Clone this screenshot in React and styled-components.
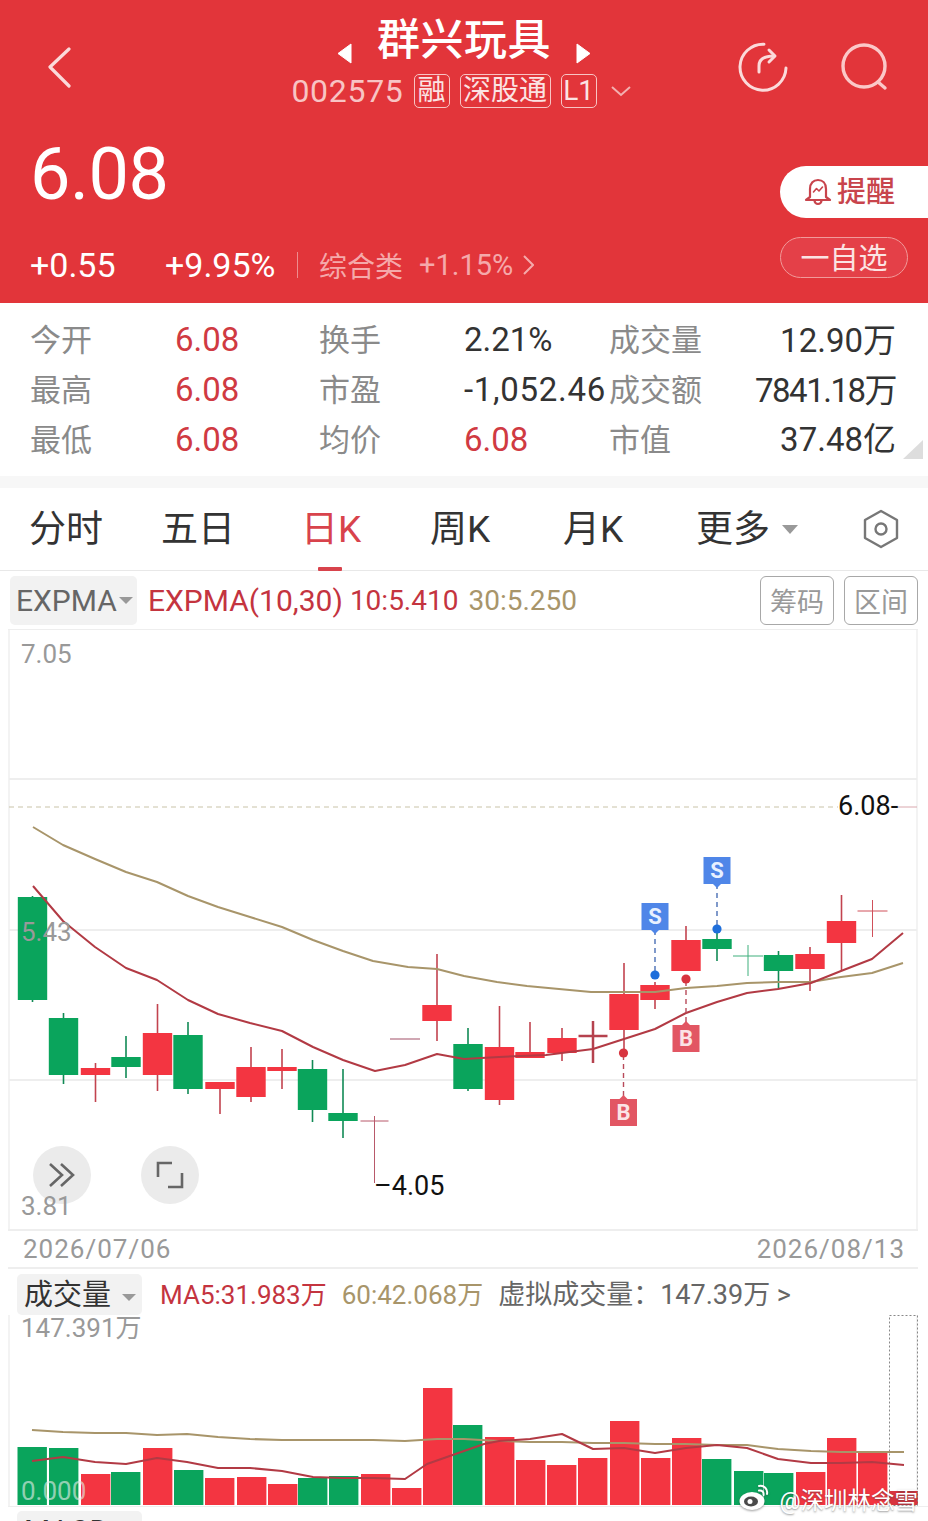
import React from 'react'
import styled, { createGlobalStyle } from 'styled-components'

const RED = '#E2353A'
const UP = '#F33541'
const DOWN = '#0AA45C'
const LINE_RED = '#B23A44'
const LINE_TAN = '#A8956A'
const CJK = `Roboto, "Noto Sans CJK SC", sans-serif`

const Global = createGlobalStyle`
  html, body { margin: 0; padding: 0; background: #fff; }
  body { font-family: ${CJK}; overflow: hidden; }
  * { box-sizing: border-box; }
`

const Page = styled.div`
  position: relative;
  width: 928px;
  height: 1521px;
  overflow: hidden;
  background: #fff;
`

/* ---------- red header ---------- */
const Header = styled.header`
  height: 303px;
  background: ${RED};
  color: #fff;
  display: flex;
  flex-direction: column;
`
const TopBar = styled.div`
  height: 122px;
  display: grid;
  grid-template-columns: 280px 1fr 280px;
`
const BackCell = styled.div`
  padding: 47px 0 0 46px;
`
const TitleCell = styled.div`
  display: flex;
  flex-direction: column;
  align-items: center;
`
const TitleRow = styled.div`
  display: flex;
  align-items: flex-start;
  gap: 25px;
  height: 66px;
`
const Title = styled.h1`
  margin: 10px 0 0;
  font-size: 43px;
  line-height: 60px;
  font-weight: 500;
  letter-spacing: 0.5px;
`
const ArrowBox = styled.span`
  display: flex;
  margin-top: 43px;
`
const SubRow = styled.div`
  display: flex;
  align-items: center;
  height: 36px;
  margin: 7px 6px 0 0;
  color: #F8C4C4;
`
const Code = styled.span`
  font-size: 32px;
  letter-spacing: 0.7px;
  margin-right: 10px;
`
const Tag = styled.span`
  display: inline-flex;
  align-items: center;
  justify-content: center;
  height: 34px;
  width: ${p => p.$w}px;
  margin-right: ${p => p.$gap || 10}px;
  border: 1px solid #F8C4C4;
  border-radius: 5px;
  font-size: 28px;
  line-height: 1;
  color: #FBE3E3;
  white-space: nowrap;
`
const IconCell = styled.div`
  display: flex;
  justify-content: flex-end;
  gap: 52px;
  padding: 42px 38px 0 0;
`
const PriceRow = styled.div`
  display: flex;
  justify-content: space-between;
  height: 112px;
`
const BigPrice = styled.div`
  font-size: 72px;
  line-height: 84px;
  margin: 11px 0 0 30px;
  letter-spacing: -0.5px;
`
const RemindButton = styled.div`
  width: 148px;
  height: 52px;
  margin-top: 44px;
  background: #fff;
  border-radius: 26px 0 0 26px;
  color: #C8444C;
  display: flex;
  align-items: center;
  padding-left: 24px;
  gap: 5px;
  font-size: 29px;
  font-weight: 500;
`
const RemindText = styled.span`
  margin-top: -6px;
`
const ChangeRow = styled.div`
  display: flex;
  align-items: center;
  justify-content: space-between;
  padding: 0 20px 0 30px;
  height: 41px;
  margin-top: 3px;
`
const ChangeInfo = styled.div`
  display: flex;
  align-items: center;
  padding-top: 14px;
`
const Change = styled.span`
  font-size: 34px;
  width: ${p => p.$w}px;
`
const Divider = styled.span`
  width: 1px;
  height: 26px;
  background: #EE8C8E;
  margin: 0 21px;
`
const Sector = styled.span`
  font-size: 28px;
  color: #F5A9AA;
  margin-right: 16px;
`
const SectorPct = styled.span`
  font-size: 29px;
  color: #F5A9AA;
  margin-right: 10px;
`
const WatchButton = styled.div`
  width: 128px;
  height: 41px;
  padding-bottom: 4px;
  border: 1px solid #F19A9A;
  border-radius: 21px;
  background: #E44048;
  display: flex;
  align-items: center;
  justify-content: center;
  font-size: 29px;
  color: #FBE3E3;
`

/* ---------- quote table ---------- */
const Stats = styled.section`
  position: relative;
  height: 185px;
  padding: 12px 32px 0 30px;
  display: grid;
  grid-template-columns: 145px 144px 145px 145px 95px 1fr;
  grid-auto-rows: 49.7px;
  align-items: center;
  border-bottom: 12px solid #F7F7F7;
`
const StatLabel = styled.span`
  font-size: 31px;
  margin-bottom: 4px;
  color: #8A8A8A;
  white-space: nowrap;
`
const StatValue = styled.span`
  font-size: 33px;
  color: ${p => (p.$up ? '#D03A42' : '#333')};
  text-align: ${p => (p.$right ? 'right' : 'left')};
  margin-bottom: ${p => (p.$right ? 4 : 0)}px;
  letter-spacing: ${p => p.$track || 0}px;
  white-space: nowrap;
`
const CornerMark = styled.span`
  position: absolute;
  right: 5px;
  bottom: 17px;
  width: 20px;
  height: 19px;
  background: #DDD;
  clip-path: polygon(100% 0, 100% 100%, 0 100%);
`

/* ---------- period tabs ---------- */
const Tabs = styled.nav`
  height: 83px;
  display: flex;
  align-items: center;
  padding: 0 27px 0 29px;
  border-bottom: 1px solid #E8E8E8;
`
const Tab = styled.span`
  position: relative;
  flex: none;
  width: ${p => (p.$w ? `${p.$w}px` : 'auto')};
  height: 83px;
  line-height: 84px;
  font-size: 37px;
  color: ${p => (p.$active ? '#D8434C' : '#333')};
  white-space: nowrap;
  ${p => p.$active && `
    &::after {
      content: '';
      position: absolute;
      left: 17px;
      bottom: 0;
      width: 24px;
      height: 4px;
      border-radius: 1px;
      background: #D8434C;
    }
  `}
`
const TabCaret = styled.span`
  width: 0;
  height: 0;
  margin-left: 12px;
  border-left: 8px solid transparent;
  border-right: 8px solid transparent;
  border-top: 9px solid #999;
`
const TabSettings = styled.span`
  margin-left: auto;
  margin-right: 2px;
  display: flex;
`

/* ---------- indicator rows ---------- */
const IndicatorRow = styled.div`
  height: 58px;
  display: flex;
  align-items: center;
  padding: 0 10px;
`
const Selector = styled.div`
  width: ${p => p.$w}px;
  height: ${p => p.$h}px;
  background: #F2F2F2;
  border-radius: 5px;
  color: ${p => p.$color};
  font-size: ${p => p.$size}px;
  display: flex;
  align-items: center;
  padding: 0 0 ${p => p.$lift || 0}px ${p => p.$pad}px;
  flex-shrink: 0;
`
const SelectorCaret = styled.span`
  width: 0;
  height: 0;
  margin-left: ${p => p.$gap}px;
  margin-top: ${p => p.$drop || 0}px;
  border-left: 7px solid transparent;
  border-right: 7px solid transparent;
  border-top: 7px solid #999;
`
const Reading = styled.span`
  font-size: ${p => p.$size || 30}px;
  color: ${p => p.$color};
  margin-left: ${p => p.$gap}px;
  margin-bottom: ${p => p.$lift || 0}px;
  white-space: nowrap;
`
const SideButton = styled.div`
  flex: none;
  width: 74px;
  height: 49px;
  margin-left: ${p => (p.$gap ? `${p.$gap}px` : 'auto')};
  border: 1px solid #A8A8A8;
  border-radius: 6px;
  color: #999;
  font-size: 27px;
  display: flex;
  align-items: center;
  justify-content: center;
`

/* ---------- charts ---------- */
const ChartPanel = styled.div`
  position: relative;
  width: 910px;
  height: 600px;
  margin-left: 8px;
`
const ChartSvg = styled.svg`
  display: block;
`
const AxisLabel = styled.span`
  position: absolute;
  left: 13px;
  top: ${p => p.$top}px;
  font-size: 26px;
  line-height: 30px;
  color: ${p => p.$light || '#999'};
  white-space: nowrap;
`
const PriceTag = styled.span`
  position: absolute;
  left: ${p => p.$left}px;
  top: ${p => p.$top}px;
  font-size: 27px;
  line-height: 30px;
  color: #111;
  white-space: nowrap;
`
const RoundButton = styled.div`
  position: absolute;
  left: ${p => p.$left}px;
  top: 517px;
  width: 58px;
  height: 58px;
  border-radius: 50%;
  background: #EBEBEB;
  display: flex;
  align-items: center;
  justify-content: center;
`
const DateRow = styled.div`
  height: 40px;
  margin: 0 10px 0 8px;
  padding: 0 13px 0 15px;
  display: flex;
  align-items: center;
  justify-content: space-between;
  border-top: 2px solid #EEE;
  border-bottom: 2px solid #EEE;
  font-size: 26px;
  letter-spacing: 1px;
  color: #999;
`
const VolumeHead = styled.div`
  height: 46px;
  display: flex;
  align-items: center;
  padding: 5px 17px 0;
`
const VolumePanel = styled.div`
  position: relative;
  width: 910px;
  height: 191px;
  margin-left: 8px;
`
const MacdRow = styled.div`
  border-top: 1px solid #EEE;
  margin: 0 0 0 8px;
  padding: 4px 0 0 9px;
`
const MacdTab = styled.div`
  width: 125px;
  height: 40px;
  background: #F2F2F2;
  border-radius: 5px;
  color: #333;
  font-size: 30px;
  line-height: 40px;
  padding-left: 7px;
`
const Watermark = styled.div`
  position: absolute;
  z-index: 1;
  right: 0;
  bottom: -9px;
  height: 28px;
  display: flex;
  align-items: flex-start;
  gap: 8px;
  color: #fff;
  font-size: 23.5px;
  line-height: 28px;
  text-shadow: 0 1px 2px rgba(60, 60, 60, 0.55);
  white-space: nowrap;
`
const WatermarkLogo = styled.span`
  display: flex;
  margin-top: -4px;
  filter: drop-shadow(0 1px 1px rgba(60, 60, 60, 0.5));
`

/* ---------- chart data, in page coordinates ---------- */
// x, wick top, wick bottom, body top, body bottom, rising
const candles = [
  [32.5, 896, 1002, 897, 1000, 0],
  [63.5, 1013, 1084, 1018, 1075, 0],
  [95.5, 1063, 1102, 1068, 1075, 1],
  [126, 1036, 1078, 1057, 1067, 0],
  [157.5, 1004, 1091, 1033, 1075, 1],
  [188, 1022, 1094, 1035, 1089, 0],
  [220, 1082, 1114, 1082, 1089, 1],
  [251, 1047, 1102, 1067, 1097, 1],
  [282, 1049, 1089, 1067, 1071, 1],
  [312.5, 1060, 1122, 1069, 1110, 0],
  [343, 1069, 1138, 1113, 1121, 0],
  [437, 954, 1041, 1005, 1021, 1],
  [468, 1028, 1091, 1044, 1089, 0],
  [499.5, 1006, 1105, 1047, 1100, 1],
  [530, 1022, 1058, 1052, 1058, 1],
  [562, 1028, 1061, 1038, 1053, 1],
  [624, 963, 1053, 994, 1030, 1],
  [655, 982, 1009, 985, 1000, 1],
  [686, 926, 971, 940, 971, 1],
  [717, 933, 961, 939, 949, 0],
  [778.5, 951, 989, 955, 971, 0],
  [810, 947, 991, 954, 969, 1],
  [841.5, 895, 970, 921, 943, 1],
]
// x, line y, wick top, wick bottom, half width, colour, stroke
const crosses = [
  [374.5, 1121, 1116, 1183, 14, '#B8596A', 1],
  [405, 1039, 1039, 1039, 15, '#C08A9A', 1.5],
  [593, 1036, 1021, 1063, 14.5, '#B5424E', 2.5],
  [748, 956, 945, 976, 15, '#3FAF7C', 1],
  [872.5, 911, 900, 937, 15, '#D0505A', 1],
]
const expma30 = [[33,827],[63,845],[95,859],[126,872],[157,882],[188,896],[218,907],[250,917],[282,927],[313,940],[343,951],[373,961],[408,967],[437,969],[464,976],[497,982],[527,986],[559,989],[591,992],[624,992],[655,992],[686,988],[717,986],[747,983],[778,982],[811,982],[841,977],[872,973],[903,963]]
const expma10 = [[33,886],[63,921],[95,947],[126,968],[157,980],[188,1000],[218,1014],[250,1023],[282,1031],[313,1047],[343,1060],[375,1071],[405,1065],[437,1054],[464,1059],[499,1057],[546,1055],[593,1049],[624,1039],[655,1029],[686,1013],[717,1002],[747,993],[778,989],[811,983],[841,971],[872,959],[903,933]]

// left, top, rising
const volumes = [
  [17.5,1446,0],[49,1447,0],[81,1473,1],[111,1471,0],[143,1447,1],[174,1469,0],[205,1477,1],[237,1476,1],[268,1483,1],[298,1477,0],[329,1475,0],[361,1473,1],[392,1487,1],[423,1387,1],[453,1424,0],
  [485,1436,1],[516,1459,1],[547,1464,1],[578,1457,1],[610,1420,1],[641,1457,1],[672,1437,1],[702,1458,0],[734,1470,0],[764,1472,0],[796,1471,1],[827,1437,1],[858,1452,1],
]
const volTan = [[32,1429],[63,1431],[95,1432],[126,1432],[157,1434],[187,1433],[218,1436],[250,1438],[282,1439],[313,1439],[343,1439],[373,1439],[405,1440],[437,1438],[464,1438],[499,1440],[530,1441],[562,1441],[593,1442],[624,1442],[655,1443],[686,1443],[717,1444],[747,1444],[778,1448],[811,1450],[841,1451],[872,1451],[904,1451]]
const volRed = [[32,1460],[63,1456],[95,1461],[126,1463],[157,1457],[187,1461],[218,1467],[250,1467],[282,1470],[313,1476],[343,1477],[373,1477],[405,1478],[427,1463],[464,1450],[484,1443],[499,1440],[530,1438],[562,1433],[593,1448],[624,1447],[655,1452],[686,1447],[717,1444],[747,1447],[778,1458],[811,1462],[841,1462],[872,1461],[904,1464]]

const toPoints = pts => pts.map(p => p.join(',')).join(' ')

const Candles = () => (
  <>
    {candles.map(([x, wt, wb, bt, bb, rising]) => (
      <g key={x}>
        <line x1={x} x2={x} y1={wt} y2={wb} stroke={rising ? '#C2434F' : '#118A55'} strokeWidth="1.6" />
        <rect x={x - 14.7} y={bt} width="29.4" height={bb - bt} fill={rising ? UP : DOWN} />
      </g>
    ))}
    {crosses.map(([x, y, wt, wb, hw, c, sw]) => (
      <g key={x} stroke={c} strokeWidth={sw}>
        <line x1={x - hw} x2={x + hw} y1={y} y2={y} />
        {wt !== wb && <line x1={x} x2={x} y1={wt} y2={wb} />}
      </g>
    ))}
  </>
)

// trade flag: label box, dashed stem, dot
const Flag = ({ x, top, dot, sell }) => {
  const fill = sell ? '#4F86E8' : '#E25663'
  const dotFill = sell ? '#1F6FDB' : '#D8343F'
  const stemFrom = sell ? top + 27 : top - 3
  return (
    <g>
      <line x1={x} x2={x} y1={stemFrom} y2={dot} stroke={sell ? '#4A6FB5' : '#B84A5A'} strokeWidth="1.4" strokeDasharray="5 4" />
      <rect x={x - 13.5} y={top} width="27" height="27" fill={fill} />
      <path d={sell ? `M${x - 4} ${top + 27}L${x} ${top + 31}L${x + 4} ${top + 27}Z` : `M${x - 4} ${top}L${x} ${top - 4}L${x + 4} ${top}Z`} fill={fill} />
      <circle cx={x} cy={dot} r="4.6" fill={dotFill} />
      <text x={x} y={top + 21} textAnchor="middle" fontSize="22" fontWeight="700" fontFamily="Roboto, sans-serif" fill={sell ? '#E8F1FF' : '#FBE3E6'}>{sell ? 'S' : 'B'}</text>
    </g>
  )
}

const PriceChart = () => (
  <ChartSvg width="910" height="600" viewBox="8 629 910 600">
    <g fill="none" strokeWidth="2">
      <path d="M9 629V1229M917 629V1229" stroke="#F3F3F3" />
      <path d="M8 629H918M9 779H917M9 930H917M9 1080H917" stroke="#EEE" />
    </g>
    <line x1="9" x2="838" y1="807" y2="807" stroke="#C9C3A8" strokeWidth="1" strokeDasharray="5 4" />
    <line x1="896" x2="917" y1="807" y2="807" stroke="#D9A8AE" strokeWidth="1" />
    <Candles />
    <polyline points={toPoints(expma30)} fill="none" stroke={LINE_TAN} strokeWidth="2" strokeLinejoin="round" />
    <polyline points={toPoints(expma10)} fill="none" stroke={LINE_RED} strokeWidth="2" strokeLinejoin="round" />
    <Flag x={655} top={903} dot={975} sell />
    <Flag x={717} top={857} dot={929} sell />
    <Flag x={623.5} top={1099} dot={1053} />
    <Flag x={686} top={1025} dot={979} />
  </ChartSvg>
)

const VolumeChart = () => (
  <ChartSvg width="910" height="191" viewBox="8 1314 910 191">
    <path d="M9 1314V1505M917 1314V1505" stroke="#F3F3F3" strokeWidth="2" />
    {volumes.map(([x, top, rising]) => (
      <rect key={x} x={x} y={top} width="29.4" height={1504 - top} fill={rising ? UP : DOWN} />
    ))}
    <rect x="889" y="1490" width="29" height="14" fill="#D8343F" />
    <rect x="889.5" y="1314.5" width="28" height="190" fill="none" stroke="#888" strokeWidth="1" strokeDasharray="2 2" />
    <polyline points={toPoints(volTan)} fill="none" stroke={LINE_TAN} strokeWidth="2" strokeLinejoin="round" />
    <polyline points={toPoints(volRed)} fill="none" stroke={LINE_RED} strokeWidth="2" strokeLinejoin="round" />
  </ChartSvg>
)

/* ---------- icons ---------- */
const BackIcon = () => (
  <svg width="26" height="42" viewBox="0 0 26 42" fill="none" stroke="#FBDADA" strokeWidth="3.2" strokeLinecap="round" strokeLinejoin="round">
    <path d="M23 2L4 20L23 39" />
  </svg>
)
const RefreshIcon = () => (
  <svg width="50" height="50" viewBox="0 0 50 50" fill="none" stroke="#FBDADA" strokeWidth="3" strokeLinecap="round" strokeLinejoin="round">
    <path d="M26 2.2A23 23 0 1 0 48 26" />
    <path d="M21 30V24C21 17 26 14 36 14" />
    <path d="M31 8L37 14L31 20" />
  </svg>
)
const SearchIcon = () => (
  <svg width="50" height="50" viewBox="0 0 50 50" fill="none" stroke="#FBC8C8" strokeWidth="3.4" strokeLinecap="round">
    <circle cx="24" cy="24" r="21" />
    <path d="M38 40L45 46" />
  </svg>
)
const Arrow = ({ right }) => (
  <ArrowBox>
    <svg width="15" height="21" viewBox="0 0 15 21" fill="#fff">
      <path d={right ? 'M1 1L14 10.5L1 20Z' : 'M14 1L1 10.5L14 20Z'} strokeLinejoin="round" stroke="#fff" />
    </svg>
  </ArrowBox>
)
const SmallChevronDown = () => (
  <svg width="20" height="11" viewBox="0 0 20 11" fill="none" stroke="#F3B0B0" strokeWidth="2">
    <path d="M1 1L10 9L19 1" />
  </svg>
)
const SmallChevronRight = () => (
  <svg width="11" height="20" viewBox="0 0 11 20" fill="none" stroke="#F5A9AA" strokeWidth="2">
    <path d="M1 1L10 10L1 19" />
  </svg>
)
const BellIcon = () => (
  <svg width="28" height="30" viewBox="0 0 28 30" fill="none" stroke="#C8444C" strokeWidth="2.2" strokeLinecap="round" strokeLinejoin="round">
    <path d="M6 20V12C6 6 9.5 3 14 3C18.5 3 22 6 22 12V20L26 23H2Z" />
    <path d="M10.5 23.5A3.5 3.5 0 0 0 17.5 23.5" />
    <path d="M9.5 15L12.5 11.5L15 14L18.5 10" strokeWidth="1.6" />
  </svg>
)
const SettingsIcon = () => (
  <svg width="36" height="40" viewBox="0 0 36 40" fill="none" stroke="#777" strokeWidth="2.4" strokeLinejoin="round">
    <path d="M18 2L34 11V29L18 38L2 29V11Z" />
    <circle cx="18" cy="20" r="5.5" />
  </svg>
)
const DoubleChevron = () => (
  <svg width="28" height="26" viewBox="0 0 28 26" fill="none" stroke="#666" strokeWidth="2.6">
    <path d="M2 2L14 13L2 24M13 2L25 13L13 24" />
  </svg>
)
const CornersIcon = () => (
  <svg width="28" height="28" viewBox="0 0 28 28" fill="none" stroke="#666" strokeWidth="2.6">
    <path d="M16 2H2V16M26 12V26H12" />
  </svg>
)
const WeiboIcon = () => (
  <WatermarkLogo>
    <svg width="32" height="28" viewBox="0 0 32 28">
      <ellipse cx="13" cy="18" rx="12.5" ry="9" fill="#fff" />
      <ellipse cx="12" cy="18.5" rx="7" ry="5" fill="#4A4A4A" />
      <circle cx="11" cy="18.5" r="2.5" fill="#fff" />
      <path d="M20 3C25 2 29 6 28 11M20 7.5C23 7 25 9 24.5 12" fill="none" stroke="#fff" strokeWidth="2" strokeLinecap="round" />
    </svg>
  </WatermarkLogo>
)

const rows = [
  { a: '今开', b: '6.08', c: '换手', d: '2.21%', e: '成交量', f: '12.90万' },
  { a: '最高', b: '6.08', c: '市盈', d: '-1,052.46', e: '成交额', f: '7841.18万', dTrack: 0.7, fTrack: -1.5 },
  { a: '最低', b: '6.08', c: '均价', d: '6.08', e: '市值', f: '37.48亿', dUp: true },
]

function App() {
  return (
    <Page>
      <Global />
      <Header>
        <TopBar>
          <BackCell><BackIcon /></BackCell>
          <TitleCell>
            <TitleRow>
              <Arrow />
              <Title>群兴玩具</Title>
              <Arrow right />
            </TitleRow>
            <SubRow>
              <Code>002575</Code>
              <Tag $w={36}>融</Tag>
              <Tag $w={91}>深股通</Tag>
              <Tag $w={36} $gap={14}>L1</Tag>
              <SmallChevronDown />
            </SubRow>
          </TitleCell>
          <IconCell>
            <RefreshIcon />
            <SearchIcon />
          </IconCell>
        </TopBar>
        <PriceRow>
          <BigPrice>6.08</BigPrice>
          <RemindButton><BellIcon /><RemindText>提醒</RemindText></RemindButton>
        </PriceRow>
        <ChangeRow>
          <ChangeInfo>
            <Change $w={135}>+0.55</Change>
            <Change $w={111}>+9.95%</Change>
            <Divider />
            <Sector>综合类</Sector>
            <SectorPct>+1.15%</SectorPct>
            <SmallChevronRight />
          </ChangeInfo>
          <WatchButton>一自选</WatchButton>
        </ChangeRow>
      </Header>

      <Stats>
        {rows.map(r => (
          <React.Fragment key={r.a}>
            <StatLabel>{r.a}</StatLabel>
            <StatValue $up>{r.b}</StatValue>
            <StatLabel>{r.c}</StatLabel>
            <StatValue $up={r.dUp} $track={r.dTrack}>{r.d}</StatValue>
            <StatLabel>{r.e}</StatLabel>
            <StatValue $right $track={r.fTrack}>{r.f}</StatValue>
          </React.Fragment>
        ))}
        <CornerMark />
      </Stats>

      <Tabs>
        <Tab $w={132}>分时</Tab>
        <Tab $w={140}>五日</Tab>
        <Tab $w={129} $active>日K</Tab>
        <Tab $w={133}>周K</Tab>
        <Tab $w={133}>月K</Tab>
        <Tab>更多</Tab>
        <TabCaret />
        <TabSettings><SettingsIcon /></TabSettings>
      </Tabs>

      <IndicatorRow>
        <Selector $w={127} $h={49} $pad={6} $size={30} $color="#666">EXPMA<SelectorCaret $gap={2} /></Selector>
        <Reading $color="#C4343F" $gap={11}>EXPMA(10,30)</Reading>
        <Reading $color="#C4343F" $gap={7} $size={28}>10:5.410</Reading>
        <Reading $color={LINE_TAN} $gap={10} $size={28}>30:5.250</Reading>
        <SideButton>筹码</SideButton>
        <SideButton $gap={10}>区间</SideButton>
      </IndicatorRow>

      <ChartPanel>
        <PriceChart />
        <RoundButton $left={25}><DoubleChevron /></RoundButton>
        <RoundButton $left={133}><CornersIcon /></RoundButton>
        <AxisLabel $top={10}>7.05</AxisLabel>
        <AxisLabel $top={288}>5.43</AxisLabel>
        <AxisLabel $top={562}>3.81</AxisLabel>
        <PriceTag $left={830} $top={162}>6.08-</PriceTag>
        <PriceTag $left={366} $top={542}>–4.05</PriceTag>
      </ChartPanel>

      <DateRow>
        <span>2026/07/06</span>
        <span>2026/08/13</span>
      </DateRow>

      <VolumeHead>
        <Selector $w={125} $h={41} $pad={7} $size={29} $lift={6} $color="#333">成交量<SelectorCaret $gap={11} $drop={12} /></Selector>
        <Reading $color="#C4343F" $gap={18} $size={26} $lift={4}>MA5:31.983万</Reading>
        <Reading $color={LINE_TAN} $gap={15} $size={26} $lift={4}>60:42.068万</Reading>
        <Reading $color="#666" $gap={15} $size={27} $lift={4}>虚拟成交量：147.39万 &gt;</Reading>
      </VolumeHead>

      <VolumePanel>
        <VolumeChart />
        <AxisLabel $top={-2}>147.391万</AxisLabel>
        <AxisLabel $top={161} $light="rgba(225, 235, 230, 0.65)">0.000</AxisLabel>
        <Watermark><WeiboIcon />@深圳林念雪</Watermark>
      </VolumePanel>

      <MacdRow>
        <MacdTab>MACD</MacdTab>
      </MacdRow>
    </Page>
  )
}

export default App
